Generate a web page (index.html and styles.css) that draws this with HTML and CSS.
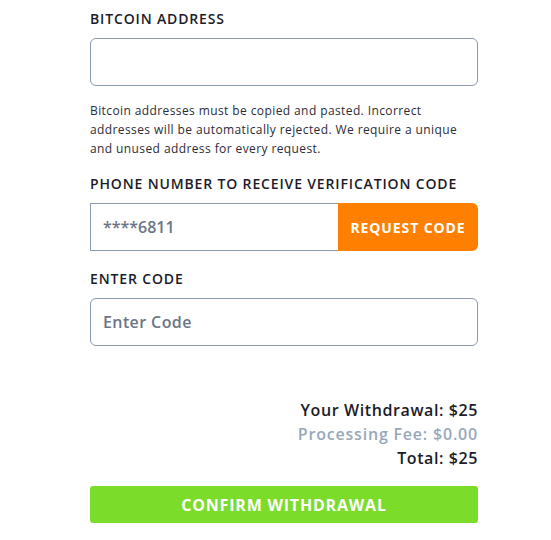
FILE: index.html
```html
<!DOCTYPE html>
<html lang="en">
<head>
    <meta charset="UTF-8">
    <meta name="viewport" content="width=device-width, initial-scale=1.0">
    <title>Withdraw - Bitcoin</title>
    <link rel="stylesheet" href="styles.css">
</head>
<body>

    <div class="container">
        <!-- Bitcoin address -->
        <label class="field-label" for="btc-address">Bitcoin Address</label>
        <input class="text-input" id="btc-address" type="text">
        <p class="help-text">Bitcoin addresses must be copied and pasted. Incorrect addresses will be automatically rejected. We require a unique and unused address for every request.</p>

        <!-- Phone verification -->
        <label class="field-label" for="phone">Phone Number to Receive Verification Code</label>
        <div class="phone-group">
            <input class="phone-input" id="phone" type="text" value="****6811" readonly>
            <button class="request-btn" type="button">Request Code</button>
        </div>

        <label class="field-label" for="code">Enter Code</label>
        <input class="text-input" id="code" type="text" placeholder="Enter Code">

        <!-- Summary -->
        <div class="summary">
            <p>Your Withdrawal: $25</p>
            <p class="fee">Processing Fee: $0.00</p>
            <p>Total: $25</p>
        </div>

        <button class="confirm-btn" type="button">Confirm Withdrawal</button>
    </div>

</body>
</html>
```

FILE: styles.css
```css
body {
    margin: 0;
    font-family: 'Open Sans', sans-serif;
    background: #fff;
    color: #1c1b29;
}

.container {
    width: 388px;
    margin-left: 90px;
    padding-top: 10px;
}

.field-label {
    display: block;
    font-size: 14px;
    font-weight: 600;
    letter-spacing: 0.85px;
    text-transform: uppercase;
    line-height: 18px;
    margin-bottom: 10px;
}

.text-input,
.phone-input {
    box-sizing: border-box;
    width: 100%;
    height: 48px;
    border: 1px solid #8b9bb0;
    border-radius: 6px;
    padding: 0 12px;
    font-family: inherit;
    font-size: 16px;
    font-weight: 600;
    letter-spacing: 0.4px;
    color: #6b7587;
    outline: none;
}

.text-input::placeholder {
    color: #6b7587;
}

.help-text {
    font-size: 12px;
    line-height: 19px;
    letter-spacing: 0.4px;
    color: #2c2c38;
    margin: 15px 0 17px;
}

.phone-group {
    display: flex;
    height: 48px;
    margin-bottom: 19px;
}

.phone-input {
    flex: 1;
    width: auto;
    border-radius: 0;
    border-right: none;
    letter-spacing: 0;
}

.request-btn {
    width: 140px;
    border: none;
    border-radius: 0 6px 6px 0;
    background: #ff7f00;
    color: #fff;
    font-family: inherit;
    font-size: 14px;
    font-weight: 700;
    letter-spacing: 0.9px;
    text-transform: uppercase;
}

.summary {
    text-align: right;
    margin-top: 52px;
}

.summary p {
    margin: 0;
    font-size: 16px;
    font-weight: 600;
    letter-spacing: 0.6px;
    line-height: 24px;
}

.summary .fee {
    color: #97a8bb;
    letter-spacing: 0.8px;
}

.confirm-btn {
    display: block;
    width: 100%;
    height: 37px;
    margin-top: 16px;
    border: none;
    border-radius: 3px;
    background: #7bdc2a;
    color: #fff;
    font-family: inherit;
    font-size: 16px;
    font-weight: 700;
    letter-spacing: 0.8px;
    text-transform: uppercase;
}
```
